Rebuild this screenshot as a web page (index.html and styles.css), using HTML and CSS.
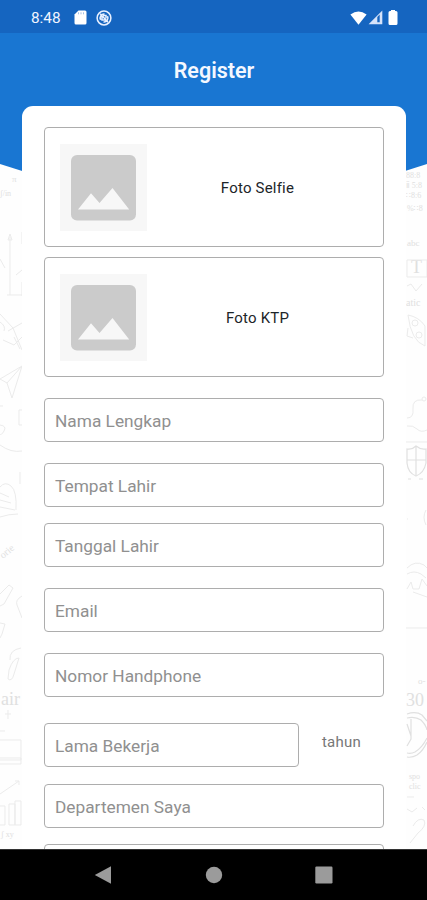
FILE: index.html
```html
<!DOCTYPE html>
<html lang="id">
<head>
<meta charset="utf-8">
<title>Register</title>
<link rel="stylesheet" href="styles.css">
</head>
<body>
<div class="screen">
  <svg class="backdrop" viewBox="0 0 427 850" aria-hidden="true">
    <g class="doodles">
      <text x="12" y="182" font-size="9">π</text>
      <text x="0" y="196" font-size="8">ʃ/in</text>
      <path d="M10 237V295M8 240l2-6 2 6zM7 295H22M22 232v12M16 275l6-5M22 282v14M0 259l5 9M0 314l13 14 9 22M0 322q6 4 4 9M3 340l11 5 8-8M8 331l14-8M14 337l6 12M0 379l22-13M0 379l7 4 15-17M7 383l5 15 10-32M0 406h3M0 425q7 1 4 6t-4 3M22 410h-3v15h3M0 445q11 8 22 6M20 472v12M0 487q5-6 11-1t5 24M0 493l9 4M0 500l11 3M0 507l15 3M0 517q9-3 18-3"/>
      <text x="3" y="559" font-size="10" transform="rotate(-40 3 559)">orie</text>
      <path d="M0 594l9-9 4 3-9 16-4 2M22 596q-7 4-5 9t5 13M0 623l5 1-3 10-2 4M21 648q-12 2-11 12M9 670q4-12 10-12l-5 16q-2 8-6 5zM8 710v9M5 714h6M0 731h5M0 740h21v20H0M0 758h21v6H0M0 794l19-13M15 781h4v4M0 806h5v19H0M9 804h6v21H9zM15 801h6v24h-6z"/>
      <text x="1" y="705" font-size="18">ai</text><text x="14" y="705" font-size="18">r</text>
      <text x="1" y="837" font-size="8">ʃ xy</text>
      <text x="406" y="178" font-size="8">88:8</text><text x="406" y="188" font-size="8">ⅱ 5:8</text>
      <text x="406" y="198" font-size="8">∷8:6</text><text x="407" y="211" font-size="8">%∷8</text>
      <text x="407" y="246" font-size="9">abc</text><text x="411" y="273" font-size="18">T</text>
      <path d="M407 260h20v17h-20zM407 286l4-2 5 7 6-7M408 315q11 2 17 11v20q-14-5-17-31zM412 323a3 3 0 1 0 6 0 3 3 0 0 0-6 0M416 335a3 3 0 1 0 6 0 3 3 0 0 0-6 0M408 328l-1 8 6 2M407 418q7 0 6-9-1-10 9-9M422 399a2 2 0 1 0 4 0 2 2 0 0 0-4 0M407 426q6-1 10 3t10 1M406 442h21"/>
      <text x="406" y="306" font-size="10">atic</text>
      <path class="strong" d="M407 449q5 1 9-3 5 4 10 3v14q-2 10-10 13-8-3-9-13zM416 447v28M407 460h19M408 479h3M419 479h4"/>
      <path d="M407 519h1M426 510q-4 7 0 15M407 568q8-8 17-3l3 3M407 574q7-4 14 0l5 4M407 589l4-7 2 7h6l3-10 5 7M413 592l14 5M406 628h21"/>
      <text x="418" y="684" font-size="9">o-</text><text x="406" y="706" font-size="18">30</text>
      <path class="strong" d="M407 714q9-3 15 1l5 6M407 718q8-2 14 2 5 5 6 10M427 742q-4 9-10 13-5 3-10 2M427 738q-5 10-12 14-4 2-8 1M411 719v20l-4 7M407 724l4 12"/>
      <text x="409" y="779" font-size="8">spo</text><text x="409" y="789" font-size="8">clic</text>
      <path d="M407 797h7M407 809l5 3 5-4M422 807l3 3M413 826q5-9 11-6 3 6-6 13l-8 10"/>
    </g>
    <path class="dome" d="M0 33H427V164Q320 200 213.5 200T0 164Z"/>
  </svg>

  <header class="status">
    <span class="time">8:48</span>
    <svg class="sd" viewBox="0 0 13 15"><path d="M4.500 .5H11q1.500 0 1.500 1.500V13q0 1.500-1.500 1.500H2Q.5 14.500.5 13V4.500z"/><path class="cut" d="M4.500 2.300v2M7 2.300v2M9.500 2.300v2"/></svg>
    <svg class="sync" viewBox="0 0 16 16"><circle cx="8" cy="8" r="6.900"/><path d="M4.600 9.800A4 4 0 0 1 8.500 4M11.500 6.200A4 4 0 0 1 7.500 12M4.200 3.800l7.800 8.400M6 6v4h4M7 5.500h3v3"/></svg>
    <span class="spacer"></span>
    <svg class="wifi" viewBox="0 0 17 14"><path d="M.4 3.400Q8.500-2.600 16.600 3.400L8.500 13.700z"/></svg>
    <svg class="signal" viewBox="0 0 15 15"><path class="tri" d="M14.300 .6V14.300H.6z"/><path class="hollow" d="M9.300 6.900l2.400-2.500v7.900H9.300z"/></svg>
    <svg class="battery" viewBox="0 0 10 15"><path d="M3 0h4v1h1q1.500 0 1.500 1.500v11Q9.500 15 8 15H2Q.5 15 .5 13.500v-11Q.5 1 2 1h1z"/></svg>
  </header>
  <h1 class="title">Register</h1>

  <main class="card">
    <div class="photo">
      <svg class="thumb" viewBox="0 0 87 87"><rect class="paper" width="87" height="87"/><rect class="frame" x="11" y="11" width="65" height="65.500" rx="6"/><path class="paper" d="M18 65.500L31 49.200l8.500 9.900L52.500 44l16.700 21.500z"/></svg>
      <span class="caption">Foto Selfie</span>
    </div>
    <div class="photo">
      <svg class="thumb" viewBox="0 0 87 87"><rect class="paper" width="87" height="87"/><rect class="frame" x="11" y="11" width="65" height="65.500" rx="6"/><path class="paper" d="M18 65.500L31 49.200l8.500 9.900L52.500 44l16.700 21.500z"/></svg>
      <span class="caption">Foto KTP</span>
    </div>
    <div class="field wide-gap">Nama Lengkap</div>
    <div class="field">Tempat Lahir</div>
    <div class="field wide-gap">Tanggal Lahir</div>
    <div class="field wide-gap">Email</div>
    <div class="field wide-gap">Nomor Handphone</div>
    <div class="row"><div class="field">Lama Bekerja</div><span class="unit">tahun</span></div>
    <div class="field">Departemen Saya</div>
    <div class="field"></div>
  </main>

  <nav class="nav">
    <svg viewBox="0 0 20 20"><path d="M.8 10L17 1.200V18.800z"/></svg>
    <svg viewBox="0 0 20 20"><circle cx="10" cy="10" r="8.200"/></svg>
    <svg viewBox="0 0 20 20"><rect x="1.300" y="1.500" width="17.200" height="17" rx="1.200"/></svg>
  </nav>
</div>
</body>
</html>
```
FILE: styles.css
```css
* { box-sizing: border-box; }
body { margin: 0; font-family: Roboto, "Liberation Sans", sans-serif; }
svg { display: block; flex: none; }
.screen {
  position: relative;
  display: grid;
  grid-template-rows: 33px 72.5px 743.5px 51px;
  width: 427px;
  height: 900px;
  overflow: hidden;
  background: #fefefe;
}
.backdrop { position: absolute; top: 0; left: 0; width: 427px; height: 850px; }
.doodles { fill: none; stroke: #ebebeb; stroke-width: 1; }
.doodles text { fill: #e0e0e0; stroke: none; font-family: "Liberation Serif", "DejaVu Sans", serif; }
.doodles .strong { stroke: #e0e0e0; stroke-width: 1.2; }
.dome { fill: #1976d2; }

.status {
  position: relative;
  display: flex;
  align-items: center;
  padding: 2px 29px 0 31px;
  background: #1565c0;
  color: #f1f5ff;
}
.status svg { fill: #fff; }
.time { width: 43px; font-size: 15.3px; line-height: 18px; }
.sd { width: 13px; height: 15px; }
.sd .cut { stroke: #8caee0; stroke-width: .8; }
.status .sync { width: 16px; height: 16px; margin-left: 9px; fill: none; stroke: #e8f0ff; stroke-width: 1.5; }
.spacer { flex: 1; }
.wifi { width: 17px; height: 14px; }
.signal { width: 15px; height: 15px; margin-left: 1px; }
.signal .tri { fill: #d6e3fa; }
.signal .hollow { fill: #1565c0; }
.battery { width: 10px; height: 15px; margin: 0 -1px 0 6px; transform: translateX(-1px); }

.title {
  position: relative;
  margin: 0;
  padding: 25px 0 0 1px;
  font-size: 21.5px;
  line-height: 26px;
  font-weight: 600;
  text-align: center;
  color: #f4f8ff;
}
.card {
  position: relative;
  display: flex;
  flex-direction: column;
  margin: 0 21px 0 22px;
  padding: 21.5px 22px 0;
  border-radius: 11px 11px 0 0;
  background: #fff;
  overflow: hidden;
}
.photo {
  display: flex;
  flex: none;
  align-items: center;
  height: 120px;
  margin-bottom: 10px;
  padding: 0 0 0 15px;
  border: 1px solid #adadad;
  border-radius: 4px;
}
.photo + .field { margin-top: 11px; }
.thumb { width: 87px; height: 87px; }
.paper { fill: #f7f7f7; }
.frame { fill: #cbcbcb; }
.caption { flex: 1; padding: 2px 15px 0 0; font-size: 15px; line-height: 18px; letter-spacing: .2px; text-align: center; color: #1d2529; }
.field {
  flex: none;
  height: 44px;
  margin-bottom: 16px;
  padding: 1px 10px 0;
  border: 1px solid #adadad;
  border-radius: 4px;
  font-size: 17.3px;
  line-height: 43px;
  color: #909090;
}
.wide-gap { margin-bottom: 21px; }
.row { display: flex; flex: none; margin-top: 5px; }
.row .field { width: 255px; margin-bottom: 17px; }
.unit { padding: 10px 0 0 23px; font-size: 15px; line-height: 18px; letter-spacing: .2px; color: #777; }
.nav {
  position: relative;
  display: flex;
  align-items: center;
  justify-content: space-between;
  padding: 0 93px 0 94px;
  border-top: 1px solid #333;
  background: #000;
}
.nav svg { width: 20px; height: 20px; fill: #9b9b9b; }
```
